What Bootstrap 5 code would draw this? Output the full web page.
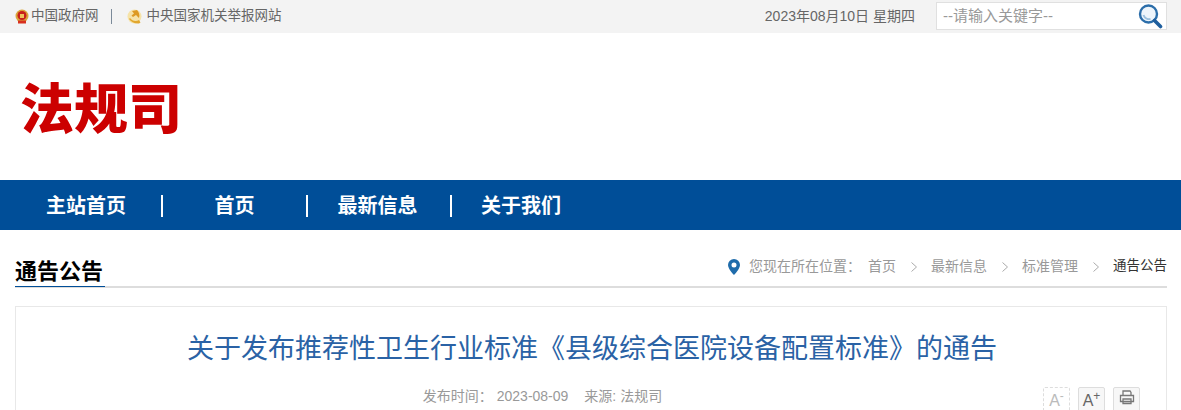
<!DOCTYPE html>
<html lang="zh-CN">
<head>
  <meta charset="UTF-8">
  <title>关于发布推荐性卫生行业标准《县级综合医院设备配置标准》的通告</title>
  <link href="https://cdn.jsdelivr.net/npm/bootstrap@5.3.0/dist/css/bootstrap.min.css" rel="stylesheet">
  <style>
    html, body { height: 410px; overflow: hidden; }
    body { font-family: "Liberation Sans", "Noto Sans CJK SC", sans-serif; background: #fff; color: #666; }
    .top-strip { height: 33px; background: #f3f3f3; padding: 0 14px 0 15px; font-size: 13.5px; color: #666; }
    .top-emblem { margin-right: 2px; }
    .top-sep { width: 1px; height: 15px; background: #7b8a99; margin: 0 15px 0 12px; }
    .top-link2 { margin-left: 5px; }
    .top-date { font-size: 14px; margin-right: 21px; }
    .search-box { width: 231px; height: 28px; margin-top: -1px; background: #fff; border: 1px solid #e0e0e0; padding: 0 3px 0 6px; font-size: 15px; color: #999; }
    .logo-row { height: 147px; padding: 47px 0 0 20px; }
    .logo-text { font-size: 54px; line-height: 60px; font-weight: 900; color: #cc0000; }
    .main-nav { height: 50px; background: #004e98; padding-top: 1px; }
    .main-nav a { color: #fff; font-size: 20px; font-weight: 700; text-decoration: none; text-align: center; }
    .main-nav a.nav-a { width: 115px; margin-left: 46px; text-align: left; }
    .nav-b { width: 143px; }
    .nav-c { width: 142px; padding-right: 3px; }
    .main-nav a.nav-d { margin-left: 29px; }
    .nav-bar { width: 2px; height: 22px; background: #fff; }
    .crumb-row { margin: 27px 14px 0 15px; height: 31px; border-bottom: 2px solid #ddd; }
    .crumb-title { font-size: 22px; line-height: 30px; font-weight: 700; color: #000; border-bottom: 1px solid #004e98; height: 30px; width: 90px; }
    .crumb-path { font-size: 14px; color: #999; height: 19px; }
    .crumb-pin { margin-right: 9px; }
    .crumb-here { margin-right: 7px; }
    .crumb-path .crumb-now { color: #333; font-size: 13.5px; }
    .crumb-arrow { margin: 0 14px 0 15px; }
    .art-box { margin: 18px 14px 0 15px; height: 200px; border: 1px solid #e8e8e8; border-bottom: 0; position: relative; }
    .art-title { font-size: 27px; line-height: 40px; color: #2a62a5; text-align: center; margin: 22px 0 0; padding-left: 2px; font-weight: 400; }
    .art-meta { font-size: 14px; color: #999; margin-top: 17px; line-height: 20px; padding-right: 97px; }
    .art-tools { position: absolute; top: 80px; right: 26px; }
    .tool-btn { width: 27px; height: 27px; border: 1px solid #ddd; border-radius: 2px; background: #f7f7f7; color: #666; font-size: 16px; line-height: 26px; text-align: center; }
    .tool-btn.dim { border-style: dashed; background: #fff; color: #bbb; }
    .tool-btn sup { font-size: 12px; top: -6px; }
    .tool-btn svg { vertical-align: 1px; }
  </style>
</head>
<body>
  <!-- top strip -->
  <div class="top-strip d-flex align-items-center">
    <svg width="14" height="15" viewBox="0 0 14 15" class="top-emblem flex-shrink-0">
      <circle cx="7" cy="7" r="6.500" fill="#d9a53a"/>
      <circle cx="7" cy="6.500" r="4.500" fill="#c8201a"/>
      <rect x="3" y="11.500" width="8" height="3" fill="#d8301f"/>
      <rect x="5" y="5" width="4" height="4" fill="#eec25a"/>
    </svg>
    <span>中国政府网</span>
    <span class="top-sep"></span>
    <svg width="15" height="15" viewBox="0 0 15 15" class="flex-shrink-0">
      <circle cx="7.500" cy="7.500" r="7" fill="#f6e3a8"/>
      <path d="M3 9c2 3 6 4 9 2l1.500 2.500-1.500 1C8 15 4 13 2 10z" fill="#e2a72e"/>
      <path d="M5 2l5-1c2 2 3 5 2 8L9 6 6 8 4.500 6.500 7 4.500z" fill="#dd9a22"/>
    </svg>
    <span class="top-link2">中央国家机关举报网站</span>
    <span class="top-date ms-auto">2023年08月10日 星期四</span>
    <div class="search-box d-flex align-items-center justify-content-between">
      <span>--请输入关键字--</span>
      <svg width="26" height="26" viewBox="0 0 26 26">
        <circle cx="11.500" cy="11" r="8.500" fill="#eef5fb" stroke="#2c6eaa" stroke-width="2.400"/>
        <path d="M6.500 12c1 3 4 4.500 7 4" fill="none" stroke="#9cc0de" stroke-width="2"/>
        <path d="M17.500 17.500l6 6" stroke="#1f5f9e" stroke-width="3.600" stroke-linecap="round"/>
      </svg>
    </div>
  </div>

  <!-- logo -->
  <div class="logo-row">
    <div class="logo-text">法规司</div>
  </div>

  <!-- main nav -->
  <nav class="main-nav d-flex align-items-center">
    <a href="#" class="nav-a">主站首页</a><span class="nav-bar"></span>
    <a href="#" class="nav-b">首页</a><span class="nav-bar"></span>
    <a href="#" class="nav-c">最新信息</a><span class="nav-bar"></span>
    <a href="#" class="nav-d">关于我们</a>
  </nav>

  <!-- section title and breadcrumb -->
  <div class="crumb-row d-flex justify-content-between align-items-start">
    <div class="crumb-title">通告公告</div>
    <div class="crumb-path d-flex align-items-center">
      <svg width="12" height="16" viewBox="0 0 12 16" class="crumb-pin flex-shrink-0">
        <path fill-rule="evenodd" d="M6 0a6 6 0 0 1 6 6c0 4-6 10-6 10S0 10 0 6a6 6 0 0 1 6-6zm0 3.500a2.500 2.500 0 1 0 0 5 2.500 2.500 0 0 0 0-5z" fill="#1f6cab"/>
      </svg>
      <span class="crumb-here">您现在所在位置：</span>
      <span>首页</span>
      <svg class="crumb-arrow" width="6" height="10" viewBox="0 0 6 10" fill="none" stroke="#aaa"><path d="M.5.500l5 4.500-5 4.500"/></svg>
      <span>最新信息</span>
      <svg class="crumb-arrow" width="6" height="10" viewBox="0 0 6 10" fill="none" stroke="#aaa"><path d="M.5.500l5 4.500-5 4.500"/></svg>
      <span>标准管理</span>
      <svg class="crumb-arrow" width="6" height="10" viewBox="0 0 6 10" fill="none" stroke="#aaa"><path d="M.5.500l5 4.500-5 4.500"/></svg>
      <span class="crumb-now">通告公告</span>
    </div>
  </div>

  <!-- article -->
  <div class="art-box">
    <h1 class="art-title">关于发布推荐性卫生行业标准《县级综合医院设备配置标准》的通告</h1>
    <div class="art-meta d-flex justify-content-center">
      <span class="me-3">发布时间： 2023-08-09</span>
      <span>来源: 法规司</span>
    </div>
    <div class="art-tools d-flex gap-2">
      <div class="tool-btn dim">A<sup>-</sup></div>
      <div class="tool-btn">A<sup>+</sup></div>
      <div class="tool-btn">
        <svg width="16" height="16" viewBox="0 0 16 16" fill="none" stroke="#777" stroke-width="1.300">
          <path d="M4 6V2h7l1 1.500V6M1.500 6.500h13v6h-13zM4 10h8v4.500H4z"/>
        </svg>
      </div>
    </div>
  </div>

  <script src="https://cdn.jsdelivr.net/npm/bootstrap@5.3.0/dist/js/bootstrap.bundle.min.js"></script>
</body>
</html>
